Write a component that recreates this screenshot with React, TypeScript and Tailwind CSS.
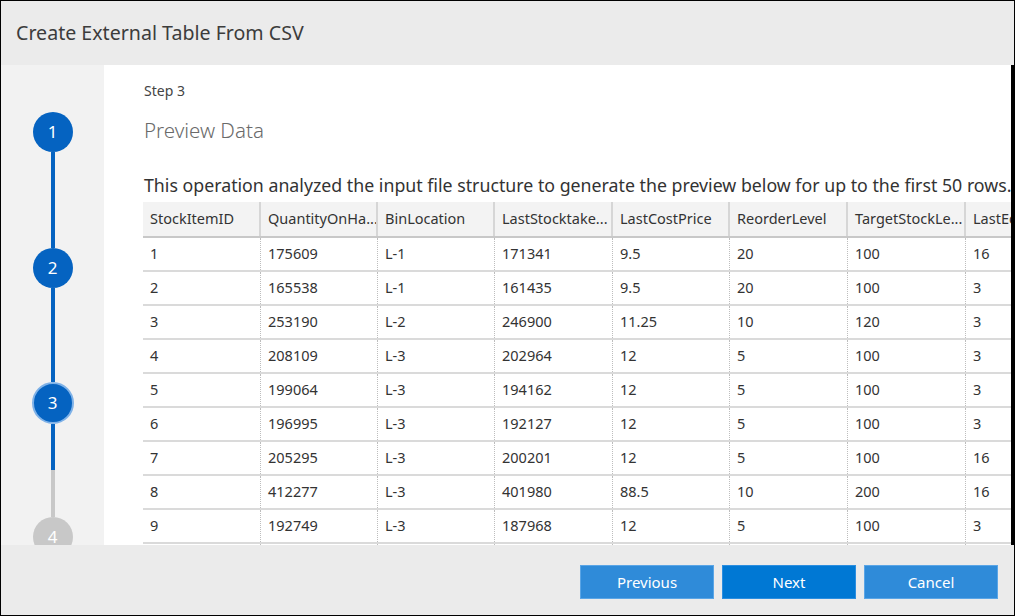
import React from "react";

const cols = [
  "StockItemID",
  "QuantityOnHa...",
  "BinLocation",
  "LastStocktake...",
  "LastCostPrice",
  "ReorderLevel",
  "TargetStockLe...",
  "LastEditedBy",
];

const rows = [
  ["1", "175609", "L-1", "171341", "9.5", "20", "100", "16"],
  ["2", "165538", "L-1", "161435", "9.5", "20", "100", "3"],
  ["3", "253190", "L-2", "246900", "11.25", "10", "120", "3"],
  ["4", "208109", "L-3", "202964", "12", "5", "100", "3"],
  ["5", "199064", "L-3", "194162", "12", "5", "100", "3"],
  ["6", "196995", "L-3", "192127", "12", "5", "100", "3"],
  ["7", "205295", "L-3", "200201", "12", "5", "100", "16"],
  ["8", "412277", "L-3", "401980", "88.5", "10", "200", "16"],
  ["9", "192749", "L-3", "187968", "12", "5", "100", "3"],
  ["10", "198441", "L-3", "193452", "12", "5", "100", "3"],
];

const widths = ["w-[118px]", "w-[117px]", "w-[117px]", "w-[118px]", "w-[117px]", "w-[118px]", "w-[118px]", "w-[118px]"];

function Circle({ n, active, current }: { n: number; active: boolean; current?: boolean }) {
  return (
    <div
      className={
        "flex items-center justify-center rounded-full text-white text-[17px] shrink-0 " +
        (current
          ? "w-[42px] h-[42px] bg-[#0563c1] border-2 border-[#7fb2e8]"
          : active
          ? "w-[40px] h-[40px] bg-[#0563c1]"
          : "w-[40px] h-[40px] bg-[#c8c8c8]")
      }
    >
      {n}
    </div>
  );
}

export default function App() {
  return (
    <div
      className="w-[1015px] h-[616px] border border-black box-border flex flex-col overflow-hidden bg-white"
      style={{ fontFamily: '"Noto Sans", "Open Sans", sans-serif' }}
    >
      <div className="h-[64px] shrink-0 bg-[#ebebeb] flex items-center pl-[15px]">
        <span className="text-[19.6px] text-[#3c3c3c]">Create External Table From CSV</span>
      </div>
      <div className="flex-1 flex min-h-0">
        <div className="w-[103px] shrink-0 bg-[#f2f2f2] flex flex-col items-center pt-[47px] overflow-hidden">
          <Circle n={1} active />
          <div className="w-[4px] h-[96px] bg-[#0563c1] shrink-0" />
          <Circle n={2} active />
          <div className="w-[4px] h-[94px] bg-[#0563c1] shrink-0" />
          <Circle n={3} active current />
          <div className="w-[4px] h-[46px] bg-[#0563c1] shrink-0" />
          <div className="w-[4px] h-[47px] bg-[#c8c8c8] shrink-0" />
          <Circle n={4} active={false} />
        </div>
        <div className="flex-1 min-w-0 flex">
          <div className="flex-1 min-w-0 pl-[40px] pt-[16px] overflow-hidden">
            <div className="text-[14px] leading-[20px] text-[#444]">Step 3</div>
            <div className="mt-[15px] text-[20.5px] leading-[28px] text-[#6a6a6a] font-light">Preview Data</div>
            <div className="mt-[29px] text-[17.75px] leading-[24px] text-[#333] whitespace-nowrap">
              This operation analyzed the input file structure to generate the preview below for up to the first 50 rows.
            </div>
            <div className="mt-[5px] -ml-[1px] w-max text-[14.5px] text-[#333]">
              <div className="flex h-[36px] bg-[#f3f3f3] border-b-2 border-[#c8c8c8] box-border">
                {cols.map((c, i) => (
                  <div
                    key={i}
                    className={widths[i] + " shrink-0 h-full flex items-center pl-[7px] border-r-2 border-[#d6d6d6] whitespace-nowrap overflow-hidden"}
                  >
                    {c}
                  </div>
                ))}
              </div>
              {rows.map((r, ri) => (
                <div key={ri} className="flex h-[34px] border-b-2 border-[#dadada] box-border">
                  {r.map((v, ci) => (
                    <div
                      key={ci}
                      className={widths[ci] + " shrink-0 h-full flex items-center pl-[7px] border-r border-dotted border-[#bdbdbd] whitespace-nowrap"}
                    >
                      {v}
                    </div>
                  ))}
                </div>
              ))}
            </div>
          </div>
          <div className="w-[3px] shrink-0 bg-black" />
        </div>
      </div>
      <div className="h-[70px] shrink-0 bg-[#ebebeb] flex justify-end items-start pt-[20px] pr-[16px] gap-[8px]">
        <button className="w-[134px] h-[34px] bg-[#2f8bd9] border border-[#5aa5e6] text-white text-[15px]">Previous</button>
        <button className="w-[134px] h-[34px] bg-[#0078d4] border border-[#2b8ee0] text-white text-[15px]">Next</button>
        <button className="w-[134px] h-[34px] bg-[#2f8bd9] border border-[#5aa5e6] text-white text-[15px]">Cancel</button>
      </div>
    </div>
  );
}
